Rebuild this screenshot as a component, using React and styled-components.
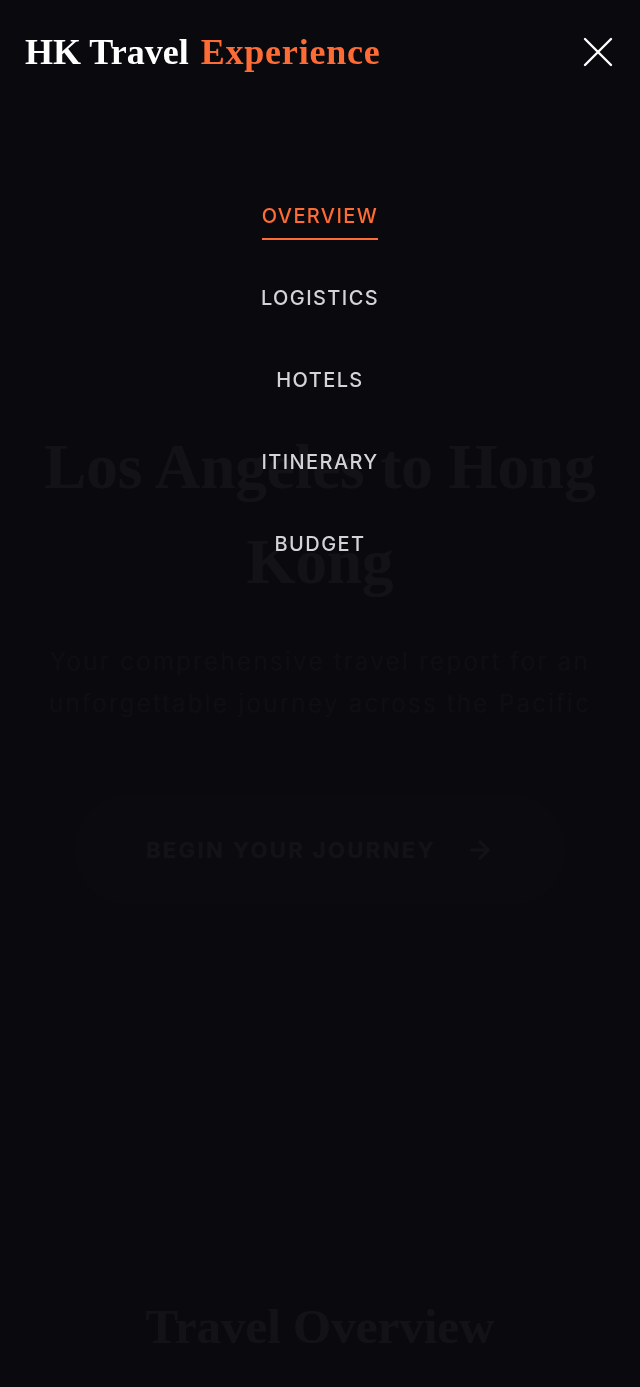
import React, { useState } from 'react';
import styled, { createGlobalStyle } from 'styled-components';
import { ArrowRight } from 'lucide-react';

const GlobalStyle = createGlobalStyle`
  html, body {
    margin: 0;
    padding: 0;
    background: #0a0a0f;
    font-family: Inter, "Noto Sans", sans-serif;
  }
  * {
    box-sizing: border-box;
  }
`

const Header = styled.header`
  position: fixed;
  top: 0;
  left: 0;
  right: 0;
  z-index: 30;
  height: 104px;
  padding: 0 26px 0 25px;
  display: flex;
  align-items: center;
  justify-content: space-between;
`

const Logo = styled.a`
  font-family: "Liberation Serif", "Times New Roman", serif;
  font-weight: 700;
  font-size: 36px;
  color: #ffffff;
  text-decoration: none;
  white-space: nowrap;
`

const LogoAccent = styled.span`
  color: #ff6b35;
  margin-left: 12px;
  letter-spacing: 0.8px;
`

const MenuToggle = styled.button`
  width: 32px;
  height: 32px;
  padding: 0;
  border: none;
  background: transparent;
  display: flex;
  align-items: center;
  justify-content: center;
  cursor: pointer;
`

const Overlay = styled.div`
  position: fixed;
  inset: 0;
  z-index: 20;
  background: rgba(10, 10, 15, 0.965);
  padding-top: 202px;
  display: flex;
  flex-direction: column;
  align-items: center;
  gap: 44px;
`

const NavLink = styled.a`
  display: block;
  font-size: 20px;
  line-height: 28px;
  font-weight: 500;
  letter-spacing: 1.4px;
  text-transform: uppercase;
  text-decoration: none;
  padding-bottom: 8px;
  border-bottom: 2px solid ${p => (p.$active ? '#ff6b35' : 'transparent')};
  color: ${p => (p.$active ? '#ff6b35' : '#d4d4d6')};
`

const Hero = styled.section`
  padding: 420px 20px 200px;
  text-align: center;
`

const HeroTitle = styled.h1`
  margin: 0;
  font-family: "Liberation Serif", "Times New Roman", serif;
  font-weight: 700;
  font-size: 63px;
  line-height: 95px;
  color: #ffffff;
`

const HeroText = styled.p`
  margin: 31px auto 0;
  max-width: 570px;
  font-size: 24px;
  font-weight: 300;
  line-height: 42px;
  letter-spacing: 2.5px;
  color: #8e8e98;
`

const CtaButton = styled.a`
  margin-top: 69px;
  width: 490px;
  height: 111px;
  border-radius: 999px;
  display: inline-flex;
  align-items: center;
  justify-content: center;
  gap: 30px;
  background: rgba(255, 107, 53, 0.12);
  color: #ffffff;
  font-size: 22px;
  font-weight: 700;
  letter-spacing: 2.4px;
  text-decoration: none;
`

const Section = styled.section`
  padding: 193px 24px 80px;
  text-align: center;
`

const SectionTitle = styled.h2`
  margin: 0;
  font-family: "Liberation Serif", "Times New Roman", serif;
  font-weight: 700;
  font-size: 49px;
  line-height: 1.2;
  color: #ffffff;
`

const links = ['Overview', 'Logistics', 'Hotels', 'Itinerary', 'Budget'];

export default function App() {
  const [open, setOpen] = useState(true);
  const [active] = useState('Overview');

  return (
    <>
      <GlobalStyle />
      <Header>
        <Logo href="#">
          HK Travel<LogoAccent>Experience</LogoAccent>
        </Logo>
        <MenuToggle onClick={() => setOpen(!open)} aria-label="Close menu">
          <svg width="30" height="30" viewBox="0 0 30 30" fill="none">
            <path d="M2 2 28 28 M28 2 2 28" stroke="#ffffff" strokeWidth="2.4" strokeLinecap="round" />
          </svg>
        </MenuToggle>
      </Header>

      {open && (
        <Overlay>
          {links.map(l => (
            <NavLink key={l} href="#" $active={l === active}>{l}</NavLink>
          ))}
        </Overlay>
      )}

      <main>
        <Hero>
          <HeroTitle>Los Angeles to Hong Kong</HeroTitle>
          <HeroText>Your comprehensive travel report for an unforgettable journey across the Pacific</HeroText>
          <CtaButton href="#">
            BEGIN YOUR JOURNEY
            <ArrowRight size={28} strokeWidth={2.5} />
          </CtaButton>
        </Hero>
        <Section>
          <SectionTitle>Travel Overview</SectionTitle>
        </Section>
      </main>
    </>
  );
}
